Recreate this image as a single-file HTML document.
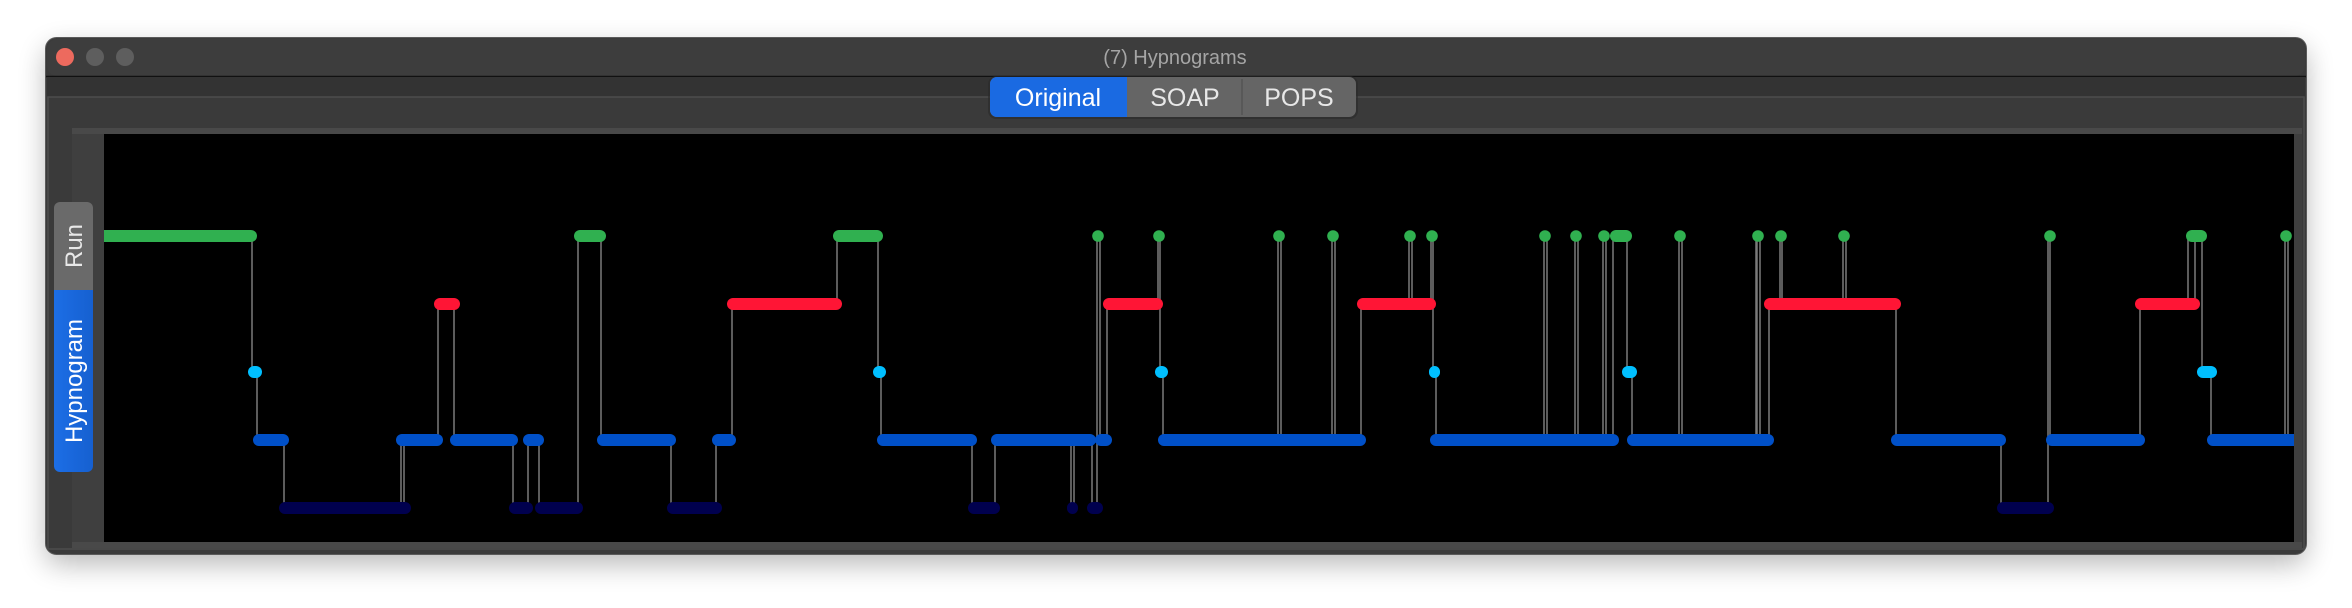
<!DOCTYPE html>
<html><head><meta charset="utf-8"><style>
html,body{margin:0;padding:0;background:#fff;width:2352px;height:608px;overflow:hidden}
svg{display:block}
text{font-family:"Liberation Sans",sans-serif}
</style></head><body>
<svg width="2352" height="608" viewBox="0 0 2352 608" xmlns="http://www.w3.org/2000/svg">
<defs>
<filter id="sh" x="-5%" y="-30%" width="110%" height="160%"><feGaussianBlur stdDeviation="14"/></filter>
<linearGradient id="bl" x1="0" y1="0" x2="1" y2="0"><stop offset="0" stop-color="#1c6ee6"/><stop offset="1" stop-color="#1660d0"/></linearGradient>
<clipPath id="pc"><rect x="104" y="134" width="2190" height="408"/></clipPath>
</defs>
<rect x="46" y="48" width="2260" height="516" rx="12" fill="#000" opacity="0.28" filter="url(#sh)"/>
<rect x="45.5" y="37.5" width="2261" height="517" rx="11" fill="#3a3a3a" stroke="#5a5a5a"/>
<rect x="47" y="39" width="2258" height="37" rx="10" fill="#3d3d3d"/>
<line x1="46" y1="76.5" x2="2306" y2="76.5" stroke="#111" stroke-width="1.5"/>
<rect x="47" y="77" width="2258" height="20" fill="#333"/>
<rect x="48" y="97" width="2256" height="452" fill="#3a3a3a" stroke="#4c4c4c" stroke-width="1.5"/>
<circle cx="65" cy="57" r="9" fill="#ed6a5e"/>
<circle cx="95" cy="57" r="9" fill="#5e5e5e"/>
<circle cx="125" cy="57" r="9" fill="#5e5e5e"/>
<text x="1175" y="64" font-size="20" fill="#a5a5a5" text-anchor="middle">(7) Hypnograms</text>
<rect x="988" y="76" width="370" height="43" rx="8" fill="#2a2a2a" opacity="0.6"/>
<rect x="990" y="77" width="366" height="40" rx="7" fill="#656565"/>
<path d="M997 77 H1127 V117 H997 A7 7 0 0 1 990 110 V84 A7 7 0 0 1 997 77 Z" fill="#1a6ae2"/>
<line x1="1242" y1="79" x2="1242" y2="115" stroke="#555" stroke-width="1.5"/>
<text x="1058" y="106" font-size="25" fill="#fff" text-anchor="middle">Original</text>
<text x="1185" y="106" font-size="25" fill="#e8e8e8" text-anchor="middle">SOAP</text>
<text x="1299" y="106" font-size="25" fill="#e8e8e8" text-anchor="middle">POPS</text>
<rect x="72" y="128" width="2230" height="420" fill="#3f3f3f"/>
<rect x="72" y="128" width="2230" height="6" fill="#494949"/>
<rect x="72" y="542" width="2230" height="6" fill="#494949"/>
<rect x="104" y="134" width="2190" height="408" fill="#000"/>
<path d="M60 202 H87 A6 6 0 0 1 93 208 V290 H54 V208 A6 6 0 0 1 60 202 Z" fill="#6a6a6a"/>
<path d="M54 290 H93 V466 A6 6 0 0 1 87 472 H60 A6 6 0 0 1 54 466 Z" fill="url(#bl)"/>
<text transform="translate(82,246) rotate(-90)" font-size="24" fill="#e8e8e8" text-anchor="middle">Run</text>
<text transform="translate(82,381) rotate(-90)" font-size="24" fill="#fff" text-anchor="middle">Hypnogram</text>
<g clip-path="url(#pc)">
<g stroke="#7a7a7a" stroke-width="1.5" fill="none">
<path d="M252 236V372 M257 372V440 M284 440V508 M401 508V440 M404 508V440 M438 440V304 M454 304V440 M513 440V508 M528 508V440 M539 440V508 M578 508V236 M601 236V440
M671 440V508 M716 508V440 M732 440V304 M837 304V236 M878 236V372 M881 372V440 M972 440V508 M995 508V440 M1071 440V508 M1074 440V508 M1092 440V508 M1097 508V236 M1100 236V440 M1107 440V304 M1158 304V236 M1160 236V372 M1163 372V440
M1278 440V236 M1281 236V440 M1332 440V236 M1335 236V440 M1361 440V304 M1409 304V236 M1412 236V304 M1431 304V236 M1433 236V372 M1436 372V440 M1544 440V236 M1547 236V440 M1575 440V236 M1578 236V440 M1603 440V236 M1606 236V440 M1613 440V236 M1627 236V372 M1632 372V440 M1679 440V236 M1682 236V440 M1756 440V236
M1757 440V236 M1760 236V440 M1769 440V304 M1780 304V236 M1782 236V304 M1843 304V236 M1846 236V304 M1896 304V440 M2001 440V508 M2048 508V236 M2050 236V440 M2140 440V304 M2188 304V236 M2195 236V304 M2202 236V372 M2211 372V440 M2285 440V236 M2288 236V440"/>
</g>
<g fill="#00004e">
<rect x="279" y="502" width="132" height="12" rx="6"/>
<rect x="509" y="502" width="24" height="12" rx="6"/>
<rect x="535" y="502" width="48" height="12" rx="6"/>
<rect x="667" y="502" width="55" height="12" rx="6"/>
<rect x="968" y="502" width="32" height="12" rx="6"/>
<rect x="1067" y="502" width="11" height="12" rx="5.5"/>
<rect x="1087" y="502" width="16" height="12" rx="6"/>
<rect x="1997" y="502" width="57" height="12" rx="6"/>
</g>
<g fill="#0050c8">
<rect x="253" y="434" width="36" height="12" rx="6"/>
<rect x="396" y="434" width="47" height="12" rx="6"/>
<rect x="450" y="434" width="68" height="12" rx="6"/>
<rect x="523" y="434" width="21" height="12" rx="6"/>
<rect x="597" y="434" width="79" height="12" rx="6"/>
<rect x="712" y="434" width="24" height="12" rx="6"/>
<rect x="877" y="434" width="100" height="12" rx="6"/>
<rect x="991" y="434" width="105" height="12" rx="6"/>
<rect x="1095" y="434" width="17" height="12" rx="6"/>
<rect x="1158" y="434" width="208" height="12" rx="6"/>
<rect x="1430" y="434" width="189" height="12" rx="6"/>
<rect x="1627" y="434" width="147" height="12" rx="6"/>
<rect x="1891" y="434" width="115" height="12" rx="6"/>
<rect x="2046" y="434" width="99" height="12" rx="6"/>
<rect x="2207" y="434" width="95" height="12" rx="6"/>
</g>
<g fill="#00bfff">
<rect x="248" y="366" width="14" height="12" rx="6"/>
<rect x="873" y="366" width="13" height="12" rx="6"/>
<rect x="1155" y="366" width="13" height="12" rx="6"/>
<rect x="1429" y="366" width="11" height="12" rx="5.5"/>
<rect x="1622" y="366" width="15" height="12" rx="6"/>
<rect x="2197" y="366" width="20" height="12" rx="6"/>
</g>
<g fill="#ff1535">
<rect x="434" y="298" width="26" height="12" rx="6"/>
<rect x="727" y="298" width="115" height="12" rx="6"/>
<rect x="1103" y="298" width="60" height="12" rx="6"/>
<rect x="1357" y="298" width="79" height="12" rx="6"/>
<rect x="1764" y="298" width="137" height="12" rx="6"/>
<rect x="2135" y="298" width="65" height="12" rx="6"/>
</g>
<g fill="#30b050">
<rect x="90" y="230" width="167" height="12" rx="6"/>
<rect x="574" y="230" width="32" height="12" rx="6"/>
<rect x="833" y="230" width="50" height="12" rx="6"/>
<rect x="1610" y="230" width="22" height="12" rx="6"/>
<rect x="2186" y="230" width="21" height="12" rx="6"/>
<circle cx="1098" cy="236" r="5.8"/>
<circle cx="1159" cy="236" r="5.8"/>
<circle cx="1279" cy="236" r="5.8"/>
<circle cx="1333" cy="236" r="5.8"/>
<circle cx="1410" cy="236" r="5.8"/>
<circle cx="1432" cy="236" r="5.8"/>
<circle cx="1545" cy="236" r="5.8"/>
<circle cx="1576" cy="236" r="5.8"/>
<circle cx="1604" cy="236" r="5.8"/>
<circle cx="1680" cy="236" r="5.8"/>
<circle cx="1758" cy="236" r="5.8"/>
<circle cx="1781" cy="236" r="5.8"/>
<circle cx="1844" cy="236" r="5.8"/>
<circle cx="2050" cy="236" r="5.8"/>
<circle cx="2286" cy="236" r="5.8"/>
</g>
</g>
</svg>
</body></html>
